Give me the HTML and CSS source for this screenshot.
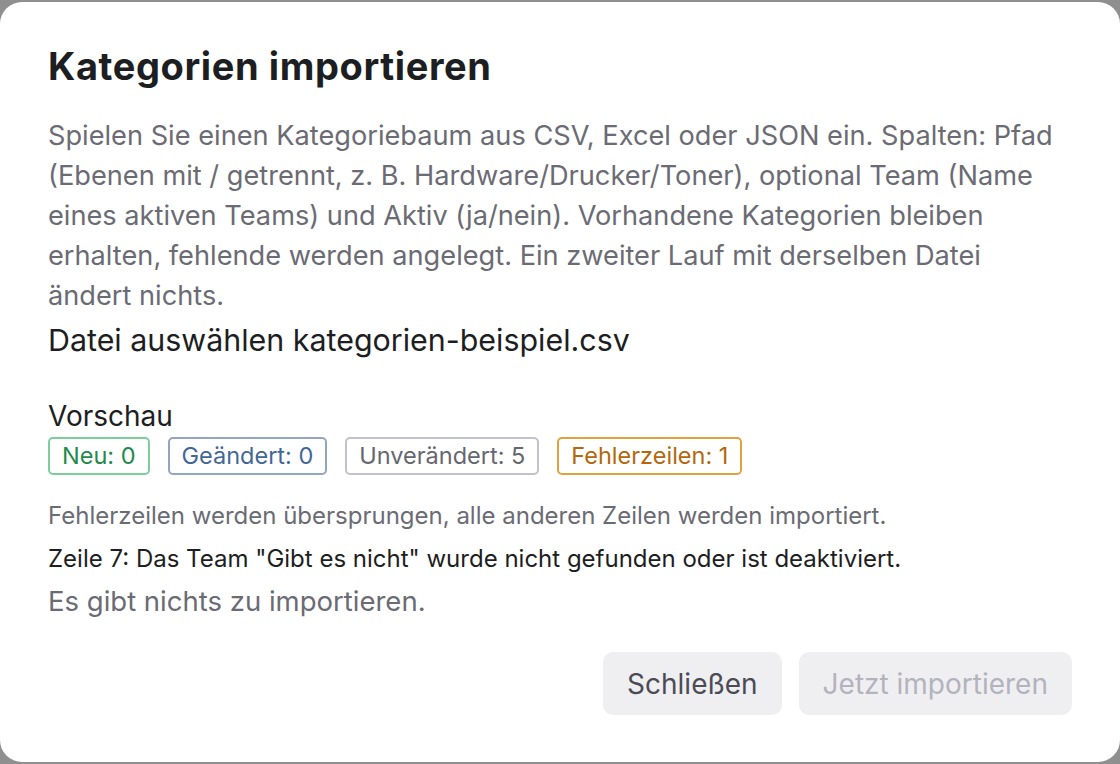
FILE: index.html
```html
<!DOCTYPE html>
<html lang="de">
<head>
    <meta charset="UTF-8">
    <meta name="viewport" content="width=device-width, initial-scale=1.0">
    <title>Kategorien importieren</title>
    <link rel="stylesheet" href="styles.css">
</head>
<body>
    <div class="dialog">
        <!-- Header -->
        <h2 class="dialog-title">Kategorien importieren</h2>
        <p class="dialog-text">Spielen Sie einen Kategoriebaum aus CSV, Excel oder JSON ein. Spalten: Pfad (Ebenen mit / getrennt, z. B. Hardware/Drucker/Toner), optional Team (Name eines aktiven Teams) und Aktiv (ja/nein). Vorhandene Kategorien bleiben erhalten, fehlende werden angelegt. Ein zweiter Lauf mit derselben Datei ändert nichts.</p>

        <!-- File picker -->
        <div class="file-row">
            <span class="file-button">Datei auswählen</span>
            <span class="file-name">kategorien-beispiel.csv</span>
        </div>

        <!-- Preview -->
        <div class="preview">
            <div class="preview-title">Vorschau</div>
            <div class="badges">
                <span class="badge new">Neu: 0</span>
                <span class="badge changed">Geändert: 0</span>
                <span class="badge same">Unverändert: 5</span>
                <span class="badge error">Fehlerzeilen: 1</span>
            </div>
            <p class="hint">Fehlerzeilen werden übersprungen, alle anderen Zeilen werden importiert.</p>
            <p class="error-line">Zeile 7: Das Team "Gibt es nicht" wurde nicht gefunden oder ist deaktiviert.</p>
            <p class="empty">Es gibt nichts zu importieren.</p>
        </div>

        <!-- Actions -->
        <div class="actions">
            <button class="btn">Schließen</button>
            <button class="btn" disabled>Jetzt importieren</button>
        </div>
    </div>
</body>
</html>
```

FILE: styles.css
```css
/* General Styles */
body {
    font-family: Inter, "Noto Sans", sans-serif;
    background-color: #8f8f8f;
    margin: 0;
    padding-top: 2px;
    height: 100vh;
    box-sizing: border-box;
}

.dialog {
    background-color: #fff;
    border-radius: 22px;
    height: 760px;
    box-sizing: border-box;
    padding: 41px 48px 47px;
    display: flex;
    flex-direction: column;
}

.dialog-title {
    font-size: 38px;
    line-height: 46px;
    font-weight: 700;
    letter-spacing: 0.6px;
    color: #1d1e22;
    margin: 0 0 27px;
}

.dialog-text {
    font-size: 27.2px;
    line-height: 40px;
    color: #6b6b74;
    margin: 0 12px 0 0;
}

.file-row {
    font-size: 30.4px;
    color: #1d1e22;
    margin-top: 4px;
    line-height: 40px;
}

.preview {
    margin-top: 39px;
}

.preview-title {
    font-size: 28px;
    color: #1d1e22;
    line-height: 34px;
}

.badges {
    display: flex;
    gap: 18px;
    margin-top: 4px;
}

.badge {
    font-size: 23.5px;
    line-height: 34px;
    padding: 0 12px;
    border: 2px solid;
    border-radius: 5px;
}

.badge.new {
    color: #1f8a4c;
    border-color: #7ccf9a;
}

.badge.changed {
    color: #3f6897;
    border-color: #93a5c0;
}

.badge.same {
    color: #66666f;
    border-color: #c2c2ca;
}

.badge.error {
    color: #b5670a;
    border-color: #e1a23e;
}

.hint {
    font-size: 24px;
    color: #6b6b74;
    margin: 26px 0 0;
    line-height: 30px;
}

.error-line {
    font-size: 24px;
    color: #1d1e22;
    margin: 13px 0 0;
    line-height: 30px;
}

.empty {
    font-size: 27.5px;
    color: #6b6b74;
    margin: 10px 0 0;
    line-height: 34px;
}

.actions {
    margin-top: auto;
    display: flex;
    justify-content: flex-end;
    gap: 17px;
}

.btn {
    font-family: inherit;
    font-size: 28px;
    background-color: #efeff2;
    color: #4b4b55;
    border: none;
    border-radius: 10px;
    height: 63px;
    padding: 0 24px;
    cursor: pointer;
}

.btn:disabled {
    color: #b3b3bd;
    cursor: default;
}
```
